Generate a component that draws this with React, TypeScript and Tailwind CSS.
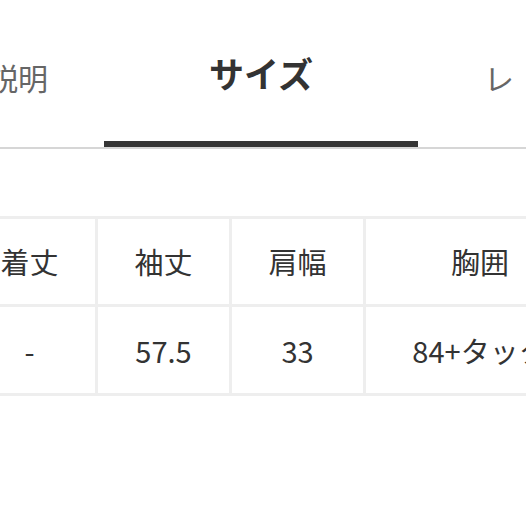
import React from "react";

const font = { fontFamily: '"Noto Sans CJK JP", "Noto Sans", sans-serif' };

export default function App() {
  const headers = ["着丈", "袖丈", "肩幅", "胸囲"];
  const values = ["-", "57.5", "33", "84+タック"];
  return (
    <div
      className="w-[526px] h-[526px] overflow-hidden bg-white"
      style={font}
    >
      <div className="flex h-[147px] ml-[-266px]">
        <div className="w-[370px] shrink-0 flex justify-end items-center pt-[6px] pr-[56px] text-[30px] text-[#666] leading-none">
          商品説明
        </div>
        <div className="w-[314px] shrink-0 flex justify-center items-center pt-[4px] border-b-[6px] border-[#353535] text-[35px] font-bold text-[#333] leading-none">
          サイズ
        </div>
        <div className="shrink-0 flex items-center pt-[6px] pl-[66px] text-[30px] text-[#666] leading-none whitespace-nowrap tracking-[24px]">
          レビュー
        </div>
      </div>
      <div className="h-[2px] bg-[#d6d6d6] w-full" />
      <div className="mt-[67px] ml-[-39px] inline-grid grid-cols-[131px_131px_131px_228px] grid-rows-[85px_86px] gap-[3px] p-[3px] bg-[#eeeeee]">
        {headers.map((h) => (
          <div
            key={h}
            className="bg-white flex items-center justify-center text-[29px] text-[#333] leading-none"
          >
            {h}
          </div>
        ))}
        {values.map((v, i) => (
          <div
            key={i}
            className="bg-white flex items-center justify-center text-[29px] text-[#333] leading-none whitespace-nowrap"
          >
            {v}
          </div>
        ))}
      </div>
    </div>
  );
}
